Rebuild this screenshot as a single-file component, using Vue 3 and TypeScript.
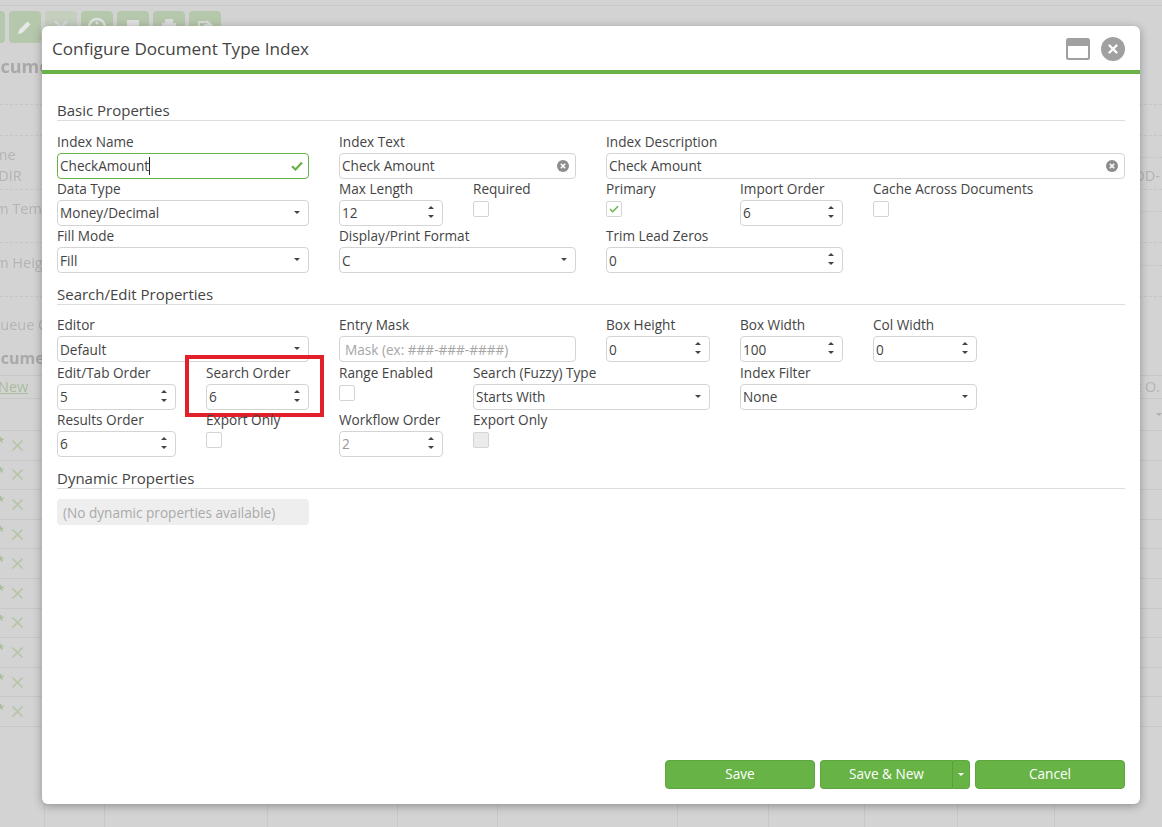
<script setup lang="ts">
type Kind = 'text' | 'select' | 'number' | 'check' | 'none'
interface Field {
  label?: string
  kind: Kind
  value?: string
  span?: number
  icon?: 'ok' | 'clear'
  placeholder?: boolean
  disabled?: boolean
  checked?: boolean
  marked?: boolean
  caret?: boolean
}
interface Section {
  title: string
  fields: Field[]
}

const sections: Section[] = [
  {
    title: 'Basic Properties',
    fields: [
      { label: 'Index Name', kind: 'text', value: 'CheckAmount', span: 2, icon: 'ok', caret: true },
      { label: 'Index Text', kind: 'text', value: 'Check Amount', span: 2, icon: 'clear' },
      { label: 'Index Description', kind: 'text', value: 'Check Amount', span: 4, icon: 'clear' },
      { label: 'Data Type', kind: 'select', value: 'Money/Decimal', span: 2 },
      { label: 'Max Length', kind: 'number', value: '12' },
      { label: 'Required', kind: 'check' },
      { label: 'Primary', kind: 'check', checked: true },
      { label: 'Import Order', kind: 'number', value: '6' },
      { label: 'Cache Across Documents', kind: 'check', span: 2 },
      { label: 'Fill Mode', kind: 'select', value: 'Fill', span: 2 },
      { label: 'Display/Print Format', kind: 'select', value: 'C', span: 2 },
      { label: 'Trim Lead Zeros', kind: 'number', value: '0', span: 2 }
    ]
  },
  {
    title: 'Search/Edit Properties',
    fields: [
      { label: 'Editor', kind: 'select', value: 'Default', span: 2 },
      { label: 'Entry Mask', kind: 'text', value: 'Mask (ex: ###-###-####)', span: 2, placeholder: true },
      { label: 'Box Height', kind: 'number', value: '0' },
      { label: 'Box Width', kind: 'number', value: '100' },
      { label: 'Col Width', kind: 'number', value: '0' },
      { kind: 'none' },
      { label: 'Edit/Tab Order', kind: 'number', value: '5' },
      { label: 'Search Order', kind: 'number', value: '6', marked: true },
      { label: 'Range Enabled', kind: 'check' },
      { label: 'Search (Fuzzy) Type', kind: 'select', value: 'Starts With', span: 2 },
      { label: 'Index Filter', kind: 'select', value: 'None', span: 2 },
      { kind: 'none' },
      { label: 'Results Order', kind: 'number', value: '6' },
      { label: 'Export Only', kind: 'check' },
      { label: 'Workflow Order', kind: 'number', value: '2', disabled: true },
      { label: 'Export Only', kind: 'check', disabled: true }
    ]
  }
]

const backdropRows: number[] = [1, 2, 3, 4, 5, 6, 7, 8, 9, 10]
const footerCells: number[] = [45, 60, 163, 130, 100, 180, 91, 96, 93, 97, 108]
</script>

<template>
  <div class="page">
    <div class="backdrop">
      <div class="top-line"></div>
      <div class="toolbar">
        <span class="tool"></span>
        <span class="tool">
          <svg viewBox="0 0 16 16" width="16" height="16"><path d="M1 15l1-4 8.500-8.500 3 3L5 14z" fill="#e8e8e8" /></svg>
        </span>
        <span class="tool tool-off">
          <svg viewBox="0 0 16 16" width="16" height="16"><path d="M2 2l12 12M14 2L2 14" stroke="#dadada" stroke-width="2.500" /></svg>
        </span>
        <span class="tool">
          <svg viewBox="0 0 20 20" width="20" height="20"><circle cx="10" cy="10" r="8" fill="none" stroke="#e2e2e2" stroke-width="2.500" /><circle cx="10" cy="6" r="1.500" fill="#e2e2e2" /></svg>
        </span>
        <span class="tool">
          <svg viewBox="0 0 16 16" width="16" height="16"><rect x="2" y="1" width="12" height="14" fill="#e2e2e2" /></svg>
        </span>
        <span class="tool">
          <svg viewBox="0 0 18 18" width="18" height="18"><path d="M5 1h8v4h3v8h-3v4H5v-4H2V5h3z" fill="#dcdcdc" /></svg>
        </span>
        <span class="tool">
          <svg viewBox="0 0 18 18" width="18" height="18"><path d="M2 3h9v2H4v9h9v-3h2v5H2zM11 2l6 5-6 5V9C8 9 7 10 6 12c0-4 2-6 5-6z" fill="#dcdcdc" /></svg>
        </span>
      </div>
      <div class="bd-row bd-head"><b>Document</b></div>
      <div class="bd-row bd-dash" style="height: 20px"></div>
      <div class="bd-row bd-dash" style="height: 31px"></div>
      <div class="bd-row bd-text bd-side" style="height: 22px"><span class="in-25 low">Name</span></div>
      <div class="bd-row bd-dash bd-mid" style="height: 32px"><span class="in-13 nudge">ODIR</span><span class="right nudge">OD-</span></div>
      <div class="bd-row bd-text bd-side" style="height: 22px"><span class="in-27 low">Form Tem</span></div>
      <div class="bd-row bd-dash" style="height: 31px"></div>
      <div class="bd-row bd-text bd-side" style="height: 23px"><span class="in-27 low">Form Heig</span></div>
      <div class="bd-row bd-dash" style="height: 31px"></div>
      <div class="bd-row bd-text" style="height: 37px"><span class="in-11">Queue C</span></div>
      <div class="bd-row bd-head2"><b>Documen</b></div>
      <div class="bd-row bd-new"><u>New</u><span class="right">t O.</span></div>
      <div class="bd-row bd-sort"><span class="sort-caret"></span></div>
      <div v-for="r in backdropRows" :key="r" class="grid-row">
        <span class="star">*</span>
        <svg class="xmark" viewBox="0 0 11 11" width="11" height="11"><path d="M.5.5l10 10M10.500.5l-10 10" stroke="#b7c5aa" stroke-width="1.600" fill="none" /></svg>
      </div>
      <div class="bd-spacer"></div>
      <div class="bd-foot">
        <span v-for="(w, i) in footerCells" :key="i" class="bd-cell" :style="{ width: w + 'px' }"></span>
      </div>
    </div>

    <section class="modal">
      <header class="modal-head">
        <h1>Configure Document Type Index</h1>
        <div class="head-icons">
          <svg viewBox="0 0 24 22" width="24" height="22">
            <path d="M2.500 0h19A2.500 2.500 0 0 1 24 2.500v17a2.500 2.500 0 0 1-2.500 2.500h-19A2.500 2.500 0 0 1 0 19.500v-17A2.500 2.500 0 0 1 2.500 0zM2 8v11a1 1 0 0 0 1 1h18a1 1 0 0 0 1-1V8z" fill="#a0a0a0" fill-rule="evenodd" />
          </svg>
          <svg viewBox="0 0 24 24" width="24" height="24">
            <circle cx="12" cy="12" r="12" fill="#a0a0a0" />
            <path d="M8.500 8.500l7 7M15.500 8.500l-7 7" stroke="#fff" stroke-width="2.400" stroke-linecap="round" />
          </svg>
        </div>
      </header>

      <div class="modal-body">
        <template v-for="section in sections" :key="section.title">
          <h2 class="sec-title">{{ section.title }}</h2>
          <div class="form-grid">
            <div
              v-for="(f, i) in section.fields"
              :key="i"
              class="cell"
              :class="'span-' + (f.span ?? 1)"
            >
              <template v-if="f.kind !== 'none'">
                <label class="lbl">{{ f.label }}</label>

                <div
                  v-if="f.kind !== 'check'"
                  class="ctl"
                  :class="{ 'ctl-ok': f.icon === 'ok', 'ctl-disabled': f.disabled, 'ctl-ph': f.placeholder }"
                >
                  <span class="val">{{ f.value }}</span>
                  <span v-if="f.caret" class="text-caret"></span>
                  <svg v-if="f.icon === 'ok'" class="ic-ok" viewBox="0 0 12 10" width="12" height="10">
                    <path d="M1 5.200l3.500 3.300L11 1.500" stroke="#67b346" stroke-width="2.200" fill="none" />
                  </svg>
                  <svg v-if="f.icon === 'clear'" class="ic-clear" viewBox="0 0 12 12" width="12" height="12">
                    <circle cx="6" cy="6" r="6" fill="#8c8c8c" />
                    <path d="M3.800 3.800l4.400 4.400M8.200 3.800l-4.400 4.400" stroke="#fff" stroke-width="1.600" />
                  </svg>
                  <span v-if="f.kind === 'select'" class="tri-down sel-caret"></span>
                  <span v-if="f.kind === 'number'" class="spin">
                    <span class="tri-up"></span>
                    <span class="tri-down"></span>
                  </span>
                </div>

                <div v-else class="chk" :class="{ 'chk-disabled': f.disabled }">
                  <svg v-if="f.checked" viewBox="0 0 10 8" width="10" height="8">
                    <path d="M1 4l2.700 2.700L9 1.200" stroke="#67b346" stroke-width="1.500" fill="none" />
                  </svg>
                </div>

                <div v-if="f.marked" class="red-box"></div>
              </template>
            </div>
          </div>
        </template>

        <h2 class="sec-title sec-dyn">Dynamic Properties</h2>
        <div class="dyn">(No dynamic properties available)</div>
      </div>

      <footer class="modal-foot">
        <button class="btn">Save</button>
        <div class="split">
          <button class="btn split-main">Save &amp; New</button>
          <button class="btn split-arrow" aria-label="More"><span class="tri-down tri-white"></span></button>
        </div>
        <button class="btn">Cancel</button>
      </footer>
    </section>
  </div>
</template>

<style>
html, body { margin: 0; background: #d2d2d2; }
</style>

<style scoped>
.page {
  position: relative;
  width: 1162px;
  height: 827px;
  overflow: hidden;
  font-family: "Open Sans", "Liberation Sans", sans-serif;
  background: #d3d3d3;
  color: #444;
}

/* ---------- dimmed page behind the dialog ---------- */
.backdrop {
  display: flex;
  flex-direction: column;
  height: 827px;
  overflow: hidden;
  filter: blur(0.6px);
  font-size: 14.500px;
  color: #b4b4b4;
}
.top-line { height: 5px; border-bottom: 1px solid #c8c8c8; flex: none; }
.toolbar {
  display: flex;
  gap: 4px;
  margin: 5px 0 0 -27px;
  flex: none;
}
.tool {
  width: 32px;
  height: 32px;
  border-radius: 4px;
  background: #b6c8ab;
  display: flex;
  align-items: center;
  justify-content: center;
}
.tool-off { background: #c4cfbe; }
.bd-row {
  position: relative;
  display: flex;
  justify-content: space-between;
  flex: none;
  white-space: nowrap;
  box-sizing: border-box;
}
.bd-head {
  height: 30px;
  margin: 12px 0 0 -24px;
  font-size: 18px;
  line-height: 22px;
  color: #a9a9a9;
}
.bd-dash { border-bottom: 1px dashed #c6c6c6; }
.bd-side::after {
  content: "";
  position: absolute;
  right: 0;
  bottom: 0;
  width: 22px;
  border-bottom: 1px dashed #c6c6c6;
}
.bd-text { align-items: flex-end; }
.bd-mid { align-items: center; }
.low { position: relative; top: 6px; }
.nudge { position: relative; top: 2px; }
.in-25 { margin-left: -25px; }
.in-13 { margin-left: -13px; }
.in-27 { margin-left: -27px; }
.in-11 { margin-left: -11px; }
.right { margin-right: 2px; }
.bd-head2 {
  height: 42px;
  padding-top: 13px;
  margin-left: -21px;
  font-size: 16px;
  line-height: 22px;
  color: #a9a9a9;
  border-bottom: 1px solid #c8c8c8;
}
.bd-new {
  height: 23px;
  margin-left: -2px;
  color: #a8bd9a;
  border-bottom: 1px solid #c8c8c8;
  line-height: 22px;
}
.bd-new .right { color: #b4b4b4; }
.bd-sort {
  height: 32px;
  border-bottom: 1px solid #c8c8c8;
  justify-content: flex-end;
  align-items: center;
}
.sort-caret {
  width: 0;
  height: 0;
  border-left: 3px solid transparent;
  border-right: 3px solid transparent;
  border-top: 3px solid #b0b0b0;
}
.grid-row {
  height: 29.600px;
  box-sizing: border-box;
  border-bottom: 1px solid #c8c8c8;
  flex: none;
  display: flex;
  align-items: center;
  position: relative;
}
.star {
  color: #a8bd9a;
  font-weight: 700;
  font-size: 13px;
  margin-left: -3px;
  width: 15px;
  margin-top: -6px;
}
.xmark { flex: none; }
.bd-spacer { flex: 1; }
.bd-foot { display: flex; height: 24px; flex: none; }
.bd-cell { height: 100%; border-right: 1px solid #c8c8c8; box-sizing: border-box; flex: none; }

/* ---------- dialog ---------- */
.modal {
  position: absolute;
  left: 42px;
  top: 26px;
  width: 1098px;
  height: 778px;
  background: #fff;
  border-radius: 6px;
  box-shadow: 0 2px 10px rgba(0, 0, 0, 0.32);
  display: flex;
  flex-direction: column;
}
.modal-head {
  height: 44px;
  flex: none;
  border-bottom: 4px solid #67b346;
  display: flex;
  align-items: center;
  justify-content: space-between;
  padding: 0 15px 0 10px;
}
.modal-head h1 {
  margin: 2px 0 0;
  font-size: 17.100px;
  font-weight: 400;
  color: #444;
  line-height: 24px;
}
.head-icons { display: flex; align-items: center; gap: 11px; margin-top: 2px; }
.modal-body { flex: 1; padding: 24px 15px 0; min-height: 0; }
.sec-title {
  margin: 0;
  height: 23px;
  box-sizing: border-box;
  border-bottom: 1px solid #ddd;
  font-size: 15px;
  font-weight: 400;
  line-height: 25px;
  color: #444;
}
.sec-dyn { margin-top: 9.200px; }
.form-grid {
  display: grid;
  grid-template-columns: 119px 103px 104px 103px 104px 103px 104px 118px;
  column-gap: 30px;
  grid-auto-rows: 47.200px;
  margin: 10.800px 0 8.200px;
}
.cell { position: relative; min-width: 0; }
.span-2 { grid-column: span 2; }
.span-4 { grid-column: span 4; }
.lbl {
  display: block;
  height: 21px;
  font-size: 13.600px;
  line-height: 19px;
  color: #444;
  white-space: nowrap;
}
.ctl {
  position: relative;
  height: 26px;
  box-sizing: border-box;
  border: 1px solid #d4d4d4;
  border-radius: 4px;
  display: flex;
  align-items: center;
  padding: 0 2px;
  font-size: 13.600px;
  color: #444;
  background: #fff;
}
.val { white-space: nowrap; }
.ctl-ok { border-color: #67b346; }
.ctl-ph .val { color: #a6a6a6; padding-left: 3px; }
.ctl-disabled .val { color: #999; }
.text-caret { width: 1px; height: 18px; background: #222; }
.ic-ok { position: absolute; right: 5px; top: 7px; }
.ic-clear { position: absolute; right: 6px; top: 6px; }
.sel-caret { position: absolute; right: 8px; top: 10px; }
.spin {
  position: absolute;
  right: 8px;
  top: 5px;
  display: flex;
  flex-direction: column;
  gap: 6px;
}
.tri-down, .tri-up {
  display: block;
  width: 0;
  height: 0;
  border-left: 3px solid transparent;
  border-right: 3px solid transparent;
}
.tri-down { border-top: 3px solid #444; }
.tri-up { border-bottom: 3px solid #444; }
.chk {
  width: 16px;
  height: 16px;
  box-sizing: border-box;
  border: 1px solid #d4d4d4;
  border-radius: 2px;
  margin-top: 1px;
  display: flex;
  align-items: center;
  justify-content: center;
  background: #fff;
}
.chk-disabled { background: #ebebeb; }
.red-box {
  position: absolute;
  left: -21px;
  right: -15px;
  top: -7.400px;
  height: 62px;
  box-sizing: border-box;
  border: 4px solid #e2202a;
  pointer-events: none;
}
.dyn {
  width: 252px;
  height: 26px;
  margin-top: 10px;
  box-sizing: border-box;
  background: #eee;
  border-radius: 4px;
  font-size: 13.600px;
  line-height: 28px;
  color: #aaa;
  padding-left: 6px;
}
.modal-foot {
  flex: none;
  display: flex;
  justify-content: flex-end;
  gap: 5px;
  padding: 0 15px 15px;
}
.btn {
  width: 150px;
  height: 29px;
  box-sizing: border-box;
  padding: 0 0 2px;
  background: #67b346;
  border: 1px solid #5ea63f;
  border-radius: 4px;
  color: #fff;
  font-family: inherit;
  font-size: 13.600px;
}
.split { display: flex; width: 150px; }
.split-main { width: 133px; border-radius: 4px 0 0 4px; border-right-color: #5a9f3c; }
.split-arrow {
  width: 17px;
  padding: 0;
  border-radius: 0 4px 4px 0;
  border-left: none;
  display: flex;
  align-items: center;
  justify-content: center;
}
.tri-white { border-top-color: #fff; }
</style>
